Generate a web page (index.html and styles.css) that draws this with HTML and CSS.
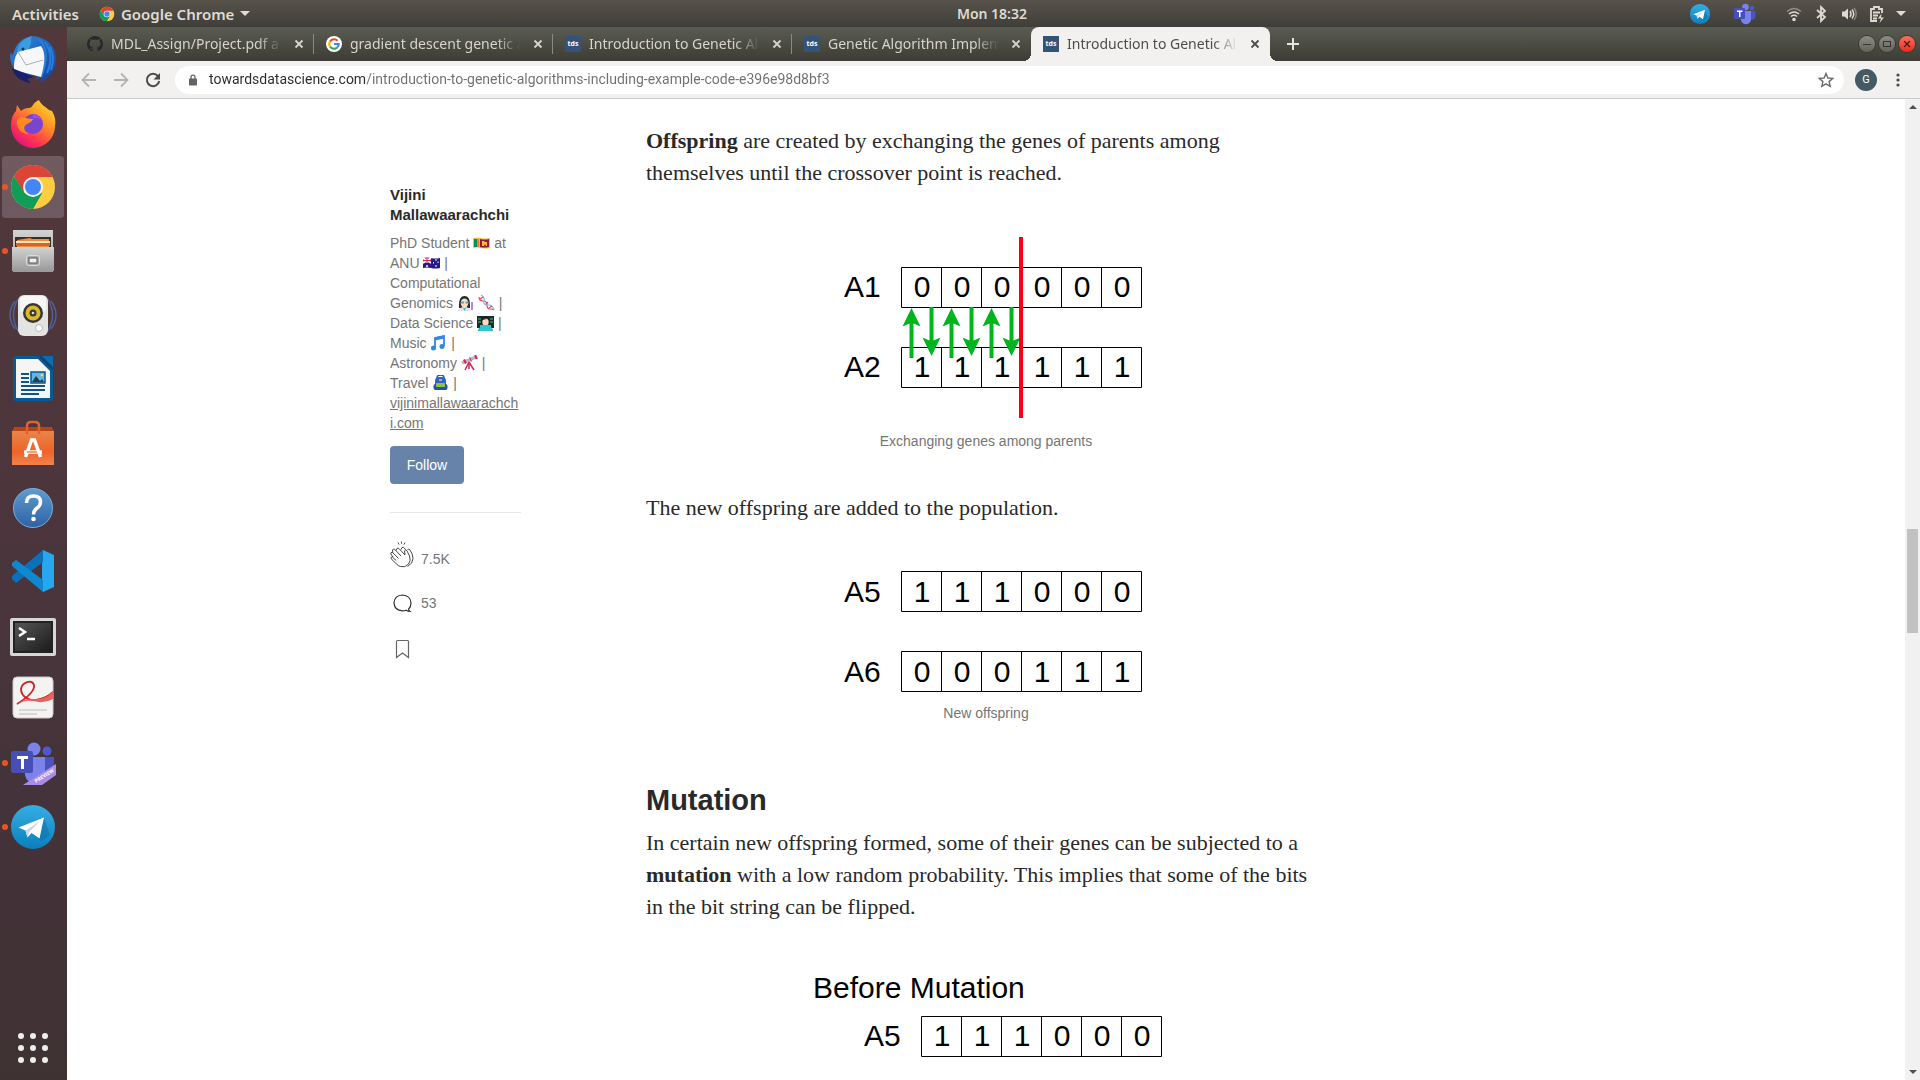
FILE: index.html
```html
<!DOCTYPE html>
<html lang="en">
<head>
<meta charset="utf-8">
<title>Introduction to Genetic Algorithms</title>
<link rel="stylesheet" href="styles.css">
</head>
<body>
<svg class="defs" aria-hidden="true">
  <defs>
    <linearGradient id="tg" x1="0" y1="0" x2="0" y2="1"><stop offset="0" stop-color="#37aee2"/><stop offset="1" stop-color="#0a7fbd"/></linearGradient>
    <linearGradient id="fox" x1="1" y1="0" x2="0.3" y2="1"><stop offset="0" stop-color="#ffe83c"/><stop offset=".4" stop-color="#ff9a22"/><stop offset=".75" stop-color="#ff3b4d"/><stop offset="1" stop-color="#e5107c"/></linearGradient>
    <linearGradient id="bird" x1="0" y1="0" x2="1" y2="1"><stop offset="0" stop-color="#2f8be0"/><stop offset="1" stop-color="#123f9c"/></linearGradient>
    <linearGradient id="metal" x1="0" y1="0" x2="0" y2="1"><stop offset="0" stop-color="#d2d2d2"/><stop offset="1" stop-color="#9a9a9a"/></linearGradient>
    <linearGradient id="bag" x1="0" y1="0" x2="0" y2="1"><stop offset="0" stop-color="#e8854a"/><stop offset=".6" stop-color="#ee6428"/><stop offset="1" stop-color="#f0824e"/></linearGradient>
    <linearGradient id="help" x1="0" y1="0" x2="0" y2="1"><stop offset="0" stop-color="#5f9bd0"/><stop offset="1" stop-color="#2d62a4"/></linearGradient>
    <linearGradient id="term" x1="0" y1="0" x2="1" y2="1"><stop offset="0" stop-color="#555"/><stop offset="1" stop-color="#1c1c1c"/></linearGradient>
    <symbol id="chrome" viewBox="0 0 48 48">
      <circle cx="24" cy="24" r="22" fill="#ffcd40"/>
      <path d="M5 13a22 22 0 0 1 38 0l1 1H24l-9.500 15.500z" fill="#db4437"/>
      <path d="M5 13a22 22 0 0 0 19 33l9.500-16.500-9.500 4.500-9-4.500z" fill="#0f9d58"/>
      <circle cx="24" cy="24" r="10" fill="#f4f4f4"/><circle cx="24" cy="24" r="8" fill="#4285f4"/>
    </symbol>
    <symbol id="telegram" viewBox="0 0 48 48">
      <circle cx="24" cy="24" r="22" fill="url(#tg)"/>
      <path d="M20 28l12 10 9-6-6-17z" fill="#0a6ea8" opacity=".5"/>
      <path d="M9.500 24.500L35 14.500 30.500 35.500 22.500 30 18.500 34.500 16.500 27.500z" fill="#fff"/>
      <path d="M16.500 27.500L31 18 20 29.500l-1.500 5z" fill="#c8daea"/>
    </symbol>
    <symbol id="teams" viewBox="0 0 48 48">
      <circle cx="38" cy="12" r="4.500" fill="#5059c9"/><path d="M34 18h11v12a7 7 0 0 1-11 4z" fill="#4b53bc"/>
      <circle cx="25" cy="10" r="6.500" fill="#7b83eb"/><path d="M16 18h20v15a10 10 0 0 1-20 3z" fill="#7b83eb"/>
      <rect x="2" y="12" width="22" height="22" rx="2" fill="#464eb8"/>
      <path d="M8 17h11v3h-4v10h-3V20H8z" fill="#fff"/>
    </symbol>
    <symbol id="cross" viewBox="0 0 12 12"><path d="M2.500 2.500l7 7M9.500 2.500l-7 7" fill="none" stroke="currentColor" stroke-width="1.800"/></symbol>
  </defs>
</svg>

<header class="topbar">
  <div class="topbar-left">
    <button class="plain">Activities</button>
    <button class="plain app-menu"><svg width="16" height="16"><use href="#chrome"/></svg>Google Chrome<i class="caret"></i></button>
  </div>
  <button class="plain clock">Mon 18:32</button>
  <div class="tray">
    <svg width="22" height="22"><use href="#telegram"/></svg>
    <svg class="tray-teams" width="24" height="24"><use href="#teams"/></svg>
    <svg class="tray-wifi" width="16" height="16" viewBox="0 0 16 16" fill="none" stroke="#dfdbd2" stroke-width="1.600"><path d="M1 5.500q7-6 14 0" opacity=".45"/><path d="M3 8q5-4 10 0M5 10.500q3-2.500 6 0"/><circle cx="8" cy="13.500" r="1" fill="#dfdbd2"/></svg>
    <svg width="16" height="18" viewBox="0 0 16 18" fill="none" stroke="#dfdbd2" stroke-width="1.800"><path d="M4 5l8 7-4 4V2l4 4-8 7"/></svg>
    <svg width="18" height="16" viewBox="0 0 18 16" fill="none" stroke="#dfdbd2" stroke-width="1.500"><path d="M2 5.500h2.500L8 2.500v11l-3.500-3H2z" fill="#dfdbd2" stroke="none"/><path d="M10 5q2 3 0 6M12 3.500q3.500 4.500 0 9"/><path d="M14 2q4.500 6 0 12" opacity=".4"/></svg>
    <svg width="16" height="18" viewBox="0 0 16 18" fill="none" stroke="#dfdbd2" stroke-width="1.800"><path d="M13 8V4h-3V2H5v2H2v12h6M4 7.500h7M4 10.500h5M4 13.500h4"/><path d="M12.500 8.500L9 13.500h3L10.500 18 15 12.500h-3z" fill="#dfdbd2" stroke="none"/></svg>
    <i class="caret"></i>
  </div>
</header>

<div class="desktop">
  <nav class="dock" aria-label="Dock">
    <button class="slot" aria-label="Thunderbird"><svg viewBox="0 0 48 48">
      <path d="M6 14C10 4 22-2 32 3c10 3 16 12 15 24-1 10-8 17-17 20l4-5-8 3 3-5H12C4 36-1 24 2 17l1 4z" fill="url(#bird)"/>
      <path d="M9 12c4-6 7-9 14-11-2 4 0 6-2 10-3 8-9 10-14 13z" fill="#3d9be0"/>
      <path d="M30 4c8 8 9 22 2 38M36 7c7 10 7 20 2 31M41 12c4 9 4 14 1 23" fill="none" stroke="#2a7edb" stroke-width="2"/>
      <path d="M9 17l23-6c5 7 4 17 0 31L5 35c0-7 0-12 4-18z" fill="#f6f7f8"/><path d="M9 17l8 13 17-5" fill="none" stroke="#aab0b6"/><circle cx="14" cy="14" r="1.500" fill="#17315c"/><path d="M3 33l22 9-7 2 4 4C12 47 5 41 3 33z" fill="#1b206b"/></svg></button>
    <button class="slot" aria-label="Firefox"><svg viewBox="0 0 48 48">
      <path d="M2 27c0-7 2-12 5-15l1-6 4 6c2-2 5-3 8-3 4 0 3-5 10-8 2 5 6 6 10 10l3 1c3 5 4 10 3 15A22 22 0 0 1 2 27z" fill="url(#fox)"/>
      <circle cx="24" cy="25" r="10" fill="#7745cf"/><path d="M24 15a10 10 0 0 1 10 8q-5-6-10-3z" fill="#a04be0"/>
      <path d="M8 20c4-4 9 0 16 0-1 3-4 4-6 5-4 2-4 8 2 10-8 0-13-6-12-15z" fill="#ff8a1f"/></svg></button>
    <button class="slot running current" aria-label="Google Chrome"><svg viewBox="0 0 48 48"><use href="#chrome"/></svg></button>
    <button class="slot running" aria-label="Files"><svg viewBox="0 0 48 48">
      <path d="M4 3h40v42H4z" fill="url(#metal)"/><path d="M6 10h36v10H6z" fill="#34302d"/><path d="M8 13l13-2 2 1h17v8H8z" fill="#f08a3c"/><path d="M7 14h34v2H7z" fill="#fde4c4"/><path d="M7 16h34v3H7z" fill="#d9641f"/>
      <path d="M3 20h42v24H3z" fill="url(#metal)"/><rect x="17.500" y="28.500" width="13" height="10" rx="2" fill="#ababab" stroke="#ddd"/><rect x="20" y="31" width="8" height="5" fill="#f0f0f0" stroke="#555"/></svg></button>
    <button class="slot" aria-label="Rhythmbox"><svg viewBox="0 0 48 48">
      <path d="M6 10Q-4 24 6 38M9 8Q0 24 9 40M42 10Q52 24 42 38M39 8Q48 24 39 40" fill="none" stroke="#506096" stroke-width="1.500"/>
      <rect x="9" y="4" width="30" height="41" rx="6" fill="#e3e3e1"/><rect x="11" y="5" width="26" height="16" rx="4" fill="#f7f7f7"/><circle cx="24" cy="22" r="10" fill="#35353a"/><circle cx="24" cy="22" r="7.500" fill="#ddb91f"/><circle cx="24" cy="22" r="3.500" fill="#36393b"/><circle cx="24" cy="22" r="1.300" fill="#ddd"/><circle cx="30" cy="37" r="3.500" fill="#fff" stroke="#bbb"/></svg></button>
    <button class="slot" aria-label="LibreOffice Writer"><svg viewBox="0 0 48 48">
      <rect x="4" y="1" width="40" height="45" rx="3" fill="#065a95"/><path d="M7 4h22l12 12v27H7z" fill="#f5f5f5"/><path d="M29 1h15v15z" fill="#0d4671"/><path d="M33 1h11v11z" fill="#0b6cb2"/>
      <path d="M12 19h8M12 23h8M12 27h8M12 31h24M12 35h24M12 39h18" stroke="#0b5687" stroke-width="2"/><rect x="22" y="17" width="14" height="11" fill="#64b5e4" stroke="#0b5687" stroke-width="1.500"/><path d="M23 27l4-6 4 5 2-2 2 3z" fill="#2c3c48"/><circle cx="33" cy="20" r="1.300" fill="#f7dc4c"/></svg></button>
    <button class="slot" aria-label="Ubuntu Software"><svg viewBox="0 0 48 48">
      <path d="M5 8h38l2 5H3z" fill="#b54419"/><path d="M3 12h42v34H3z" fill="url(#bag)"/><path d="M18 15V7q0-4 4-4h4q4 0 4 4v8" fill="none" stroke="#e4602c" stroke-width="2.500"/>
      <path d="M16.500 38L22.500 21h3L31.500 38M15 33h18" fill="none" stroke="#fff" stroke-width="3.500"/><path d="M18 33h10" stroke="#ee6428" stroke-width="1.200"/></svg></button>
    <button class="slot" aria-label="Help"><svg viewBox="0 0 48 48">
      <circle cx="24" cy="25" r="19.500" fill="url(#help)" stroke="#78aeda"/><path d="M17.500 20q0-7 7-7t7 6q0 4-4 6.500-3 2-3 6" fill="none" stroke="#fff" stroke-width="3.500"/><circle cx="24.500" cy="36" r="2.300" fill="#fff"/></svg></button>
    <button class="slot" aria-label="Visual Studio Code"><svg viewBox="0 0 48 48">
      <path d="M34 3l11 5v32l-11 5-1-4V7z" fill="#27a7f0"/><path d="M34 3v12L7 36l-4-4v-3z" fill="#0b70b8"/><path d="M34 45V33L7 13l-4 3v3z" fill="#0f88d2"/></svg></button>
    <button class="slot" aria-label="Terminal"><svg viewBox="0 0 48 48">
      <g transform="translate(0 3)"><rect x="1" y="4" width="46" height="38" rx="2" fill="#d6d6d4"/><rect x="4" y="7" width="40" height="32" fill="#222"/><rect x="6" y="9" width="36" height="28" fill="url(#term)"/><path d="M10 14l6 4-6 4M18 25h8" fill="none" stroke="#fff" stroke-width="2.500"/></g></svg></button>
    <button class="slot" aria-label="Document Viewer"><svg viewBox="0 0 48 48">
      <rect x="4" y="2" width="40" height="41" rx="4" fill="#f3f3f2" stroke="#c9c9c9"/><path d="M8 29C16 24 26 16 25 10 23 4 13 7 12 14c0 8 9 12 15 11 8-1 13-4 17-8" fill="none" stroke="#cd1f26" stroke-width="1.800"/><path d="M6 30q8-6 16-6 14 2 22-8v8q-9 5-20 2-9-1-18 4z" fill="#e6635f"/><path d="M10 35h28M10 39h18" stroke="#bbb"/></svg></button>
    <button class="slot running" aria-label="Teams"><svg viewBox="0 0 48 48"><use href="#teams"/><path d="M14 46L47 25v11L33 46z" fill="#ac8be6"/><text class="ribbon" x="0" y="0" transform="translate(27 44) rotate(-32)">PREVIEW</text></svg></button>
    <button class="slot running" aria-label="Telegram"><svg viewBox="0 0 48 48"><use href="#telegram"/></svg></button>
    <button class="slot apps" aria-label="Show applications"><svg viewBox="0 0 48 48" fill="#eee"><circle cx="12" cy="12" r="3"/><circle cx="24" cy="12" r="3"/><circle cx="36" cy="12" r="3"/><circle cx="12" cy="24" r="3"/><circle cx="24" cy="24" r="3"/><circle cx="36" cy="24" r="3"/><circle cx="12" cy="36" r="3"/><circle cx="24" cy="36" r="3"/><circle cx="36" cy="36" r="3"/></svg></button>
  </nav>

  <div class="browser">
    <div class="tabstrip">
      <div class="tab"><svg class="fav" viewBox="0 0 16 16"><path d="M8 0a8 8 0 0 0-2.500 15.600V13c-2 .5-2.500-.5-3-1.500 1.500 0 1.500 1.500 3 1l.5-1C3.500 11 2.500 9.500 2.500 7.500q0-1.500 1-2.500-.5-1 0-2 1 0 2 1a8 8 0 0 1 5 0q1-1 2-1 .5 1 0 2 1 1 1 2.500c0 2-1 3.500-3.500 4l.5 1.500v2.600A8 8 0 0 0 8 0z" fill="#24292e"/></svg><button class="tab-title">MDL_Assign/Project.pdf a</button><button class="tab-close" aria-label="Close tab"><svg width="12" height="12"><use href="#cross"/></svg></button></div>
      <div class="tab"><svg class="fav" viewBox="0 0 16 16"><circle cx="8" cy="8" r="8" fill="#fff"/><g fill="none" stroke-width="2.200"><path d="M4 5.500A4.700 4.700 0 0 1 11.500 4.800" stroke="#ea4335"/><path d="M4 5.500a4.700 4.700 0 0 0 0 5" stroke="#fbbc05"/><path d="M4 10.500a4.700 4.700 0 0 0 7.200 1" stroke="#34a853"/><path d="M8 8h4.700a4.700 4.700 0 0 1-1.500 3.500" stroke="#4285f4"/></g></svg><button class="tab-title">gradient descent genetic a</button><button class="tab-close" aria-label="Close tab"><svg width="12" height="12"><use href="#cross"/></svg></button></div>
      <div class="tab"><span class="fav tds">tds</span><button class="tab-title">Introduction to Genetic Al</button><button class="tab-close" aria-label="Close tab"><svg width="12" height="12"><use href="#cross"/></svg></button></div>
      <div class="tab last"><span class="fav tds">tds</span><button class="tab-title">Genetic Algorithm Implem</button><button class="tab-close" aria-label="Close tab"><svg width="12" height="12"><use href="#cross"/></svg></button></div>
      <div class="tab active"><span class="fav tds">tds</span><button class="tab-title">Introduction to Genetic Al</button><button class="tab-close" aria-label="Close tab"><svg width="12" height="12"><use href="#cross"/></svg></button></div>
      <button class="new-tab" aria-label="New tab"><svg width="14" height="14" viewBox="0 0 14 14"><path d="M7 1v12M1 7h12" stroke="#e6e4dc" stroke-width="2"/></svg></button>
      <div class="win-buttons">
        <button class="win" aria-label="Minimise"><svg viewBox="0 0 16 16"><path d="M4 8.500h8" stroke="#35342f"/></svg></button>
        <button class="win" aria-label="Maximise"><svg viewBox="0 0 16 16"><rect x="4.500" y="5.500" width="7" height="5" fill="none" stroke="#35342f"/></svg></button>
        <button class="win win-close" aria-label="Close"><svg viewBox="0 0 16 16"><path d="M5 5l6 6M11 5l-6 6" stroke="#4b1208" stroke-width="1.200"/></svg></button>
      </div>
    </div>

    <div class="toolbar">
      <button class="tool" aria-label="Back"><svg viewBox="0 0 16 16" fill="none" stroke="#b4b3b2" stroke-width="1.800"><path d="M15 8H2M8 1.500L1.500 8 8 14.500"/></svg></button>
      <button class="tool" aria-label="Forward"><svg viewBox="0 0 16 16" fill="none" stroke="#b4b3b2" stroke-width="1.800"><path d="M1 8h13M8 1.500L14.500 8 8 14.500"/></svg></button>
      <button class="tool" aria-label="Reload"><svg viewBox="0 0 16 16"><path d="M13 4.200A6.200 6.200 0 1 0 14.200 9" fill="none" stroke="#4a4a4a" stroke-width="2"/><path d="M15 1v6.500H8.500z" fill="#4a4a4a"/></svg></button>
      <div class="omnibox">
        <svg width="8" height="12" viewBox="0 0 10 14"><rect x="0" y="5" width="10" height="9" rx="1" fill="#5f6368"/><path d="M2.500 6V3.500a2.500 2.500 0 0 1 5 0V6" fill="none" stroke="#5f6368" stroke-width="1.600"/></svg>
        <input class="url" type="text" aria-label="Address" value="towardsdatascience.com/introduction-to-genetic-algorithms-including-example-code-e396e98d8bf3">
        <button class="star" aria-label="Bookmark this page"><svg viewBox="0 0 16 16"><path d="M8 1.500l1.900 4.500 4.900.4-3.700 3.200 1.100 4.800L8 11.900l-4.200 2.500 1.100-4.800L1.200 6.400l4.900-.4z" fill="none" stroke="#6b6b6b" stroke-width="1.400"/></svg></button>
      </div>
      <button class="avatar" aria-label="Profile">G</button>
      <button class="menu" aria-label="Menu"><svg width="4" height="14" viewBox="0 0 4 14" fill="#4a4a4a"><circle cx="2" cy="2" r="1.600"/><circle cx="2" cy="7" r="1.600"/><circle cx="2" cy="12" r="1.600"/></svg></button>
    </div>

    <div class="viewport">
      <main class="page">
        <aside class="author">
          <h2 class="name">Vijini Mallawaarachchi</h2>
          <p class="bio">PhD Student
            <svg class="emoji" viewBox="0 0 17 16"><path d="M0 3q4-1 8 0t9 0v10q-5 1-9 0t-8 0z" fill="#f8c02c"/><path d="M1 4h3v8H1z" fill="#118a5b"/><path d="M4 4h2v8H4z" fill="#f0812b"/><path d="M7 4q4 1 9 0v8q-5 1-9 0z" fill="#8d1b3d"/><path d="M9 6h2l1 1h2v4h-1l-1-2-1 2H9z" fill="#f8c02c"/></svg> at ANU
            <svg class="emoji" viewBox="0 0 17 16"><path d="M0 3q4-1 8 0t9 0v10q-5 1-9 0t-8 0z" fill="#281a88"/><path d="M0 3l8 5M8 3L0 8" stroke="#fff" stroke-width="1.500"/><path d="M0 5.500h8M4 3v5" stroke="#fff" stroke-width="2.200"/><path d="M0 5.500h8M4 3v5" stroke="#d8224a" stroke-width="1.200"/><path d="M4 10v2M3 11h2M13 4v2M13 10v2M10.500 7v1.500M15 6.500V8" stroke="#fff"/></svg> | Computational Genomics
            <svg class="emoji" viewBox="0 0 17 16"><path d="M2 10q0-9 5.500-9T13 10v3H2z" fill="#26262b"/><path d="M1 16q1-4 6.500-4t6.500 4z" fill="#dfe5e8"/><ellipse cx="7.500" cy="8" rx="3.800" ry="4.500" fill="#f8dcc4"/><path d="M4 7.500h3M8.500 7.500h3" stroke="#58a8bb" stroke-width="2"/><path d="M6 13l1.500 3 1.500-3z" fill="#4cb5c4"/><path d="M15 7v8" stroke="#b983d2" stroke-width="2"/></svg>
            <svg class="emoji" viewBox="0 0 17 16" fill="none" stroke-width="1.200"><path d="M1 2q0 4 4 4t4 4 3 4 4 1" stroke="#d84d55"/><path d="M3 0q4 2 3 6t4 4 6 5" stroke="#85b2e6"/><path d="M2 4l3-2M8 9l2-2M11 13l3-2" stroke="#d84d55"/></svg> | Data Science
            <svg class="emoji" viewBox="0 0 17 16"><rect x="0" y="1" width="17" height="12" fill="#1d2b2a"/><path d="M1 4h3M1 7h3M13 4h3M13 7h3" stroke="#2fcf74"/><path d="M4 8q0-7 4.500-7T13 8z" fill="#1c1c20"/><ellipse cx="8.500" cy="7" rx="3.200" ry="3.500" fill="#f8dcc4"/><path d="M5 5q3-3 7 0L10 4z" fill="#1c1c20"/><path d="M1 15q1-4 7.500-4t7.500 4v1H1z" fill="#28b8c6"/><rect x="3" y="10" width="11" height="6" fill="#2fc6d4"/></svg> | Music
            <svg class="emoji" viewBox="0 0 17 16"><path d="M5 13V3l9-2v10" fill="none" stroke="#3187e2" stroke-width="1.800"/><path d="M5 4l9-2" stroke="#3187e2" stroke-width="3"/><circle cx="3.500" cy="13" r="2.500" fill="#3187e2"/><circle cx="12" cy="11.500" r="2.500" fill="#3187e2"/></svg> | Astronomy
            <svg class="emoji" viewBox="0 0 17 16"><path d="M1 8l14-6" stroke="#aebbc3" stroke-width="3.500"/><path d="M3 7l2-1M14 2.500l2-.8M9 4.700l1-.4" stroke="#d8275b" stroke-width="4.500"/><path d="M8 7l-4 8M8 7l5 8M8 7v7" stroke="#d8275b" stroke-width="1.500"/></svg> | Travel
            <svg class="emoji" viewBox="0 0 17 16"><path d="M5 3q0-3 3.500-3T12 3" fill="none" stroke="#284fb6" stroke-width="1.400"/><rect x="3" y="2" width="11" height="13" rx="4" fill="#2e63d0"/><rect x="1.500" y="9" width="14" height="6" rx="2" fill="#2850b5"/><rect x="4" y="8" width="9" height="4" rx="1" fill="#8bc73e"/><path d="M7 5h3" stroke="#fbd030" stroke-width="1.500"/></svg> |
            <a class="site" href="#site">vijinimallawaarachchi.com</a></p>
          <button class="follow">Follow</button>
          <div class="actions">
            <button class="action applause"><svg class="clap" viewBox="0 0 24 28" fill="none" stroke="#333" stroke-width=".9" stroke-linejoin="round"><path d="M8 1.500l1 2M11.500.5v2.200M15 1.500l-1 2"/><path d="M7 23.500L1.200 17.800q-.8-1.600 1-2l4 3.700M3 16L.8 13q-.3-1.800 1.500-1.800L8.500 17.500M2.800 11.700L2.500 9q.8-1.800 2.300-.6L11 15M6 9.500L7 7.500q1.200-.8 2.200.3L15 14l-.5-4.200q1-1.800 2.500 0L19.500 15q1.800 4.500-1 8-3.500 4-8 2.500-2-.6-3.500-2"/><path d="M11 8.500l1-2q1.300-.8 2.200.4l1.500 2M17.500 9q.8-1.800 2.300-.3Q23 13 23 17.500q0 5-5.500 8"/></svg><span>7.5K</span></button>
            <button class="action"><svg class="talk" viewBox="0 0 24 24" fill="none" stroke="#333" stroke-width="1.200"><path d="M18.500 18.200Q21 16 21 11.900 20.500 4.500 12.500 4 4.500 4.300 4 11.900q.5 7.600 8.500 8 2 0 3.700-.7 1.800 1.300 3.800 1.300-1.300-1-1.500-2.300z"/></svg><span>53</span></button>
            <button class="action" aria-label="Save"><svg class="save" viewBox="0 0 24 24" fill="none" stroke="#666" stroke-width="1.200"><path d="M6.500 4.500q0-1 1-1h10q1 0 1 1v16l-6-4.500-6 4.500z"/></svg></button>
          </div>
        </aside>

        <article class="story">
          <p><strong>Offspring</strong> are created by exchanging the genes of parents among<br>themselves until the crossover point is reached.</p>
          <figure>
            <svg class="diagram" width="680" height="182" viewBox="0 0 680 182">
              <path class="cells" d="M255.500 30.500h240v40h-240zM295.500 30v41M335.500 30v41M375.500 30v41M415.500 30v41M455.500 30v41M255.500 110.500h240v40h-240zM295.500 110v41M335.500 110v41M375.500 110v41M415.500 110v41M455.500 110v41"/>
              <text x="198" y="60">A1</text>
              <g class="bits"><text x="276" y="60">0</text><text x="316" y="60">0</text><text x="356" y="60">0</text><text x="396" y="60">0</text><text x="436" y="60">0</text><text x="476" y="60">0</text></g>
              <text x="198" y="140">A2</text>
              <g class="bits"><text x="276" y="140">1</text><text x="316" y="140">1</text><text x="356" y="140">1</text><text x="396" y="140">1</text><text x="436" y="140">1</text><text x="476" y="140">1</text></g>
              <g fill="#00b41e">
                <path id="up" d="M265.500 71l9 18.500-7-3V121h-4V86.500l-7 3z"/><use href="#up" x="40"/><use href="#up" x="80"/>
                <path id="down" d="M285.500 119l9-18.500-7 3V70h-4v33.500l-7-3z"/><use href="#down" x="40"/><use href="#down" x="80"/>
              </g>
              <rect x="373" y="0" width="4" height="181" fill="#fb0012"/>
            </svg>
            <figcaption>Exchanging genes among parents</figcaption>
          </figure>
          <p>The new offspring are added to the population.</p>
          <figure>
            <svg class="diagram" width="680" height="120" viewBox="0 0 680 120">
              <path class="cells" d="M255.500.5h240v40h-240zM295.500 0v41M335.500 0v41M375.500 0v41M415.500 0v41M455.500 0v41M255.500 80.500h240v40h-240zM295.500 80v41M335.500 80v41M375.500 80v41M415.500 80v41M455.500 80v41"/>
              <text x="198" y="31">A5</text>
              <g class="bits"><text x="276" y="31">1</text><text x="316" y="31">1</text><text x="356" y="31">1</text><text x="396" y="31">0</text><text x="436" y="31">0</text><text x="476" y="31">0</text></g>
              <text x="198" y="111">A6</text>
              <g class="bits"><text x="276" y="111">0</text><text x="316" y="111">0</text><text x="356" y="111">0</text><text x="396" y="111">1</text><text x="436" y="111">1</text><text x="476" y="111">1</text></g>
            </svg>
            <figcaption>New offspring</figcaption>
          </figure>
          <h1>Mutation</h1>
          <p>In certain new offspring formed, some of their genes can be subjected to a <strong>mutation</strong> with a low random probability. This implies that some of the bits in the bit string can be flipped.</p>
          <figure>
            <svg class="diagram" width="680" height="110" viewBox="0 0 680 110">
              <text x="167" y="28">Before Mutation</text>
              <path class="cells" d="M275.500 46.500h240v40h-240zM315.500 46v41M355.500 46v41M395.500 46v41M435.500 46v41M475.500 46v41"/>
              <text x="218" y="76">A5</text>
              <g class="bits"><text x="296" y="76">1</text><text x="336" y="76">1</text><text x="376" y="76">1</text><text x="416" y="76">0</text><text x="456" y="76">0</text><text x="496" y="76">0</text></g>
            </svg>
          </figure>
        </article>
      </main>
      <div class="scrollbar" aria-hidden="true">
        <i class="arrow-up"></i>
        <div class="track"><div class="thumb"></div></div>
        <i class="arrow-down"></i>
      </div>
    </div>
  </div>
</div>
</body>
</html>
```
FILE: styles.css
```css
* { box-sizing: border-box; }
body {
  margin: 0;
  height: 100vh;
  display: flex;
  flex-direction: column;
  overflow: hidden;
  background: #fff;
  font-family: "Noto Sans", "Open Sans", sans-serif;
  font-size: 14px;
}
button {
  font: inherit;
  color: inherit;
  background: none;
  border: 0;
  padding: 0;
  text-align: left;
}
svg { display: block; flex: none; }
.defs { position: absolute; width: 0; height: 0; }

/* Desktop top bar */
.topbar {
  flex: none;
  height: 27px;
  display: grid;
  grid-template-columns: 43fr auto 40fr;
  align-items: center;
  padding: 0 14px 0 12px;
  background: linear-gradient(#57534b, #403e39);
  color: #dfdbd2;
  font-weight: 600;
}
.topbar-left { display: flex; gap: 20px; font-size: 15px; }
.plain { white-space: nowrap; line-height: 20px; }
.app-menu { display: flex; align-items: center; gap: 6px; }
.caret {
  width: 0;
  border: 5px solid transparent;
  border-top-color: #dfdbd2;
  border-bottom: 0;
}
.tray { display: flex; align-items: center; justify-content: flex-end; gap: 11px; }
.tray-teams { margin-left: 11px; }
.tray-wifi { margin-left: 18px; }

.desktop { flex: 1; min-height: 0; display: flex; }

/* Dock */
.dock {
  flex: none;
  width: 67px;
  display: flex;
  flex-direction: column;
  background: linear-gradient(#52383b, #4b353c 50%, #44333a 75%, #3f3233);
}
.slot {
  position: relative;
  height: 64px;
  width: 62px;
  margin-left: 2px;
  display: flex;
  align-items: center;
  justify-content: center;
  border-radius: 4px;
}
.slot svg { width: 48px; height: 48px; overflow: visible; }
.current { background: linear-gradient(#715b60, #6d595f); background-clip: content-box; padding: 1px 0; }
.running::before {
  content: "";
  position: absolute;
  left: 0;
  top: 29px;
  width: 6px;
  height: 6px;
  border-radius: 3px;
  background: #e95420;
}
.ribbon { font: 700 5px "Open Sans", sans-serif; fill: #fff; }
.apps { margin-top: auto; }

/* Browser chrome */
.browser { flex: 1; min-width: 0; display: flex; flex-direction: column; }
.tabstrip {
  flex: none;
  height: 34px;
  display: flex;
  align-items: center;
  padding: 0 5px 0 8px;
  background: linear-gradient(#5a5c51, #3d3c36);
  color: #d6d4cc;
}
.tab {
  position: relative;
  width: 239px;
  height: 34px;
  display: flex;
  align-items: center;
  padding: 0 9px 0 12px;
}
.tab::after {
  content: "";
  position: absolute;
  right: 0;
  top: 7px;
  width: 1px;
  height: 20px;
  background: #8a8a80;
}
.tab.last::after { display: none; }
.fav { width: 16px; height: 16px; flex: none; margin-right: 8px; }
.tds {
  background: #355278;
  color: #fff;
  font: 700 7px/16px "Open Sans", sans-serif;
  text-align: center;
}
.tab-title {
  flex: 1;
  min-width: 0;
  overflow: hidden;
  white-space: nowrap;
  line-height: 24px;
  -webkit-mask-image: linear-gradient(90deg, #000 84%, transparent 98%);
  mask-image: linear-gradient(90deg, #000 84%, transparent 98%);
}
.tab-close { margin-left: 8px; }
.tab.active { background: #f2f1f0; color: #4d4d4d; border-radius: 8px 8px 0 0; }
.tab.active::before,
.tab.active::after {
  content: "";
  position: absolute;
  top: auto;
  bottom: 0;
  width: 8px;
  height: 8px;
}
.tab.active::before { left: -8px; background: radial-gradient(circle at 0 0, transparent 8px, #f2f1f0 8px); }
.tab.active::after { right: -8px; background: radial-gradient(circle at 100% 0, transparent 8px, #f2f1f0 8px); }
.new-tab { margin-left: 16px; }
.win-buttons { margin-left: auto; display: flex; gap: 4px; }
.win {
  width: 16px;
  height: 16px;
  border-radius: 8px;
  background: linear-gradient(#8d8c84, #64635c);
  box-shadow: 0 0 0 1px #3a3934;
}
.win-close { background: linear-gradient(#f9735a, #ee2a1c); }

.toolbar {
  flex: none;
  height: 38px;
  display: flex;
  align-items: center;
  padding: 0 20px 0 14px;
  background: #f2f1f0;
  border-bottom: 1px solid #cbcac9;
}
.tool { width: 16px; margin-right: 16px; }
.omnibox {
  flex: 1;
  height: 28px;
  margin-left: -2px;
  display: flex;
  align-items: center;
  padding: 0 10px 0 14px;
  border-radius: 14px;
  background: #fff;
}
.url {
  flex: 1;
  min-width: 0;
  height: 24px;
  margin-left: 12px;
  padding: 0 0 2px;
  border: 0;
  outline: 0;
  font: 14px Roboto, "Noto Sans", sans-serif;
  color: transparent;
  /* the host name is darker than the path after it */
  background: linear-gradient(90deg, #2a2a2a 157px, #6f6f6f 157px);
  -webkit-background-clip: text;
  background-clip: text;
}
.star { width: 16px; }
.avatar {
  width: 22px;
  height: 22px;
  margin-left: 11px;
  border-radius: 11px;
  background: #455a64;
  color: #fff;
  font: 11px/22px Roboto, sans-serif;
  text-align: center;
}
.menu { margin-left: 19px; }

/* Page */
.viewport { flex: 1; min-height: 0; display: flex; }
.page {
  flex: 1;
  min-width: 0;
  overflow: hidden;
  display: grid;
  grid-template-columns: 1fr minmax(0, 680px) 1fr;
  align-items: start;
}
.author {
  justify-self: end;
  width: 131px;
  margin: 86px 125px 0 0;
  font: 14px/20px "Liberation Sans", Arial, sans-serif;
  color: #757575;
}
.name { margin: 0 0 8px; font-size: 15px; line-height: 20px; color: #292929; }
.bio { margin: 0; overflow-wrap: break-word; }
.emoji { display: inline-block; width: 17px; height: 16px; vertical-align: -3px; }
.site { color: inherit; text-decoration: underline; }
.follow {
  display: block;
  margin-top: 13px;
  padding: 9px 16px;
  width: 74px;
  border-radius: 4px;
  background: #6783aa;
  color: #fff;
  text-align: center;
}
.actions {
  margin-top: 28px;
  padding-top: 28px;
  border-top: 1px solid #e6e6e6;
  display: flex;
  flex-direction: column;
  gap: 22px;
}
.action { display: flex; align-items: center; gap: 7px; }
.applause { align-items: flex-end; }
.clap { width: 24px; height: 28px; }
.talk, .save { width: 24px; height: 24px; }

.story {
  padding-top: 26px;
  color: #292929;
  font: 22px/32px "Liberation Serif", "Times New Roman", serif;
}
.story p { margin: 0; }
figure { margin: 47px 0 41px; }
.story p:first-child + figure { margin-top: 48px; }
.diagram { max-width: 100%; height: auto; overflow: visible; font: 30px "Liberation Sans", Arial, sans-serif; fill: #000; }
.bits { text-anchor: middle; }
.cells { fill: none; stroke: #000; }
figcaption {
  margin-top: 12px;
  text-align: center;
  font: 14px/20px "Liberation Sans", Arial, sans-serif;
  color: #757575;
}
h1 {
  margin: 59px 0 9px;
  font: 700 29px/36px "Liberation Sans", Arial, sans-serif;
}

.scrollbar {
  flex: none;
  width: 15px;
  display: flex;
  flex-direction: column;
  align-items: center;
  background: #f1f1f1;
}
.arrow-up, .arrow-down { width: 0; margin: 6px 0; border: 4px solid transparent; }
.arrow-up { border-bottom-color: #505050; border-top: 0; }
.arrow-down { border-top-color: #505050; border-bottom: 0; }
.track { flex: 1; width: 11px; }
.thumb { height: 11%; margin-top: 414px; background: #c1c1c1; }
```
